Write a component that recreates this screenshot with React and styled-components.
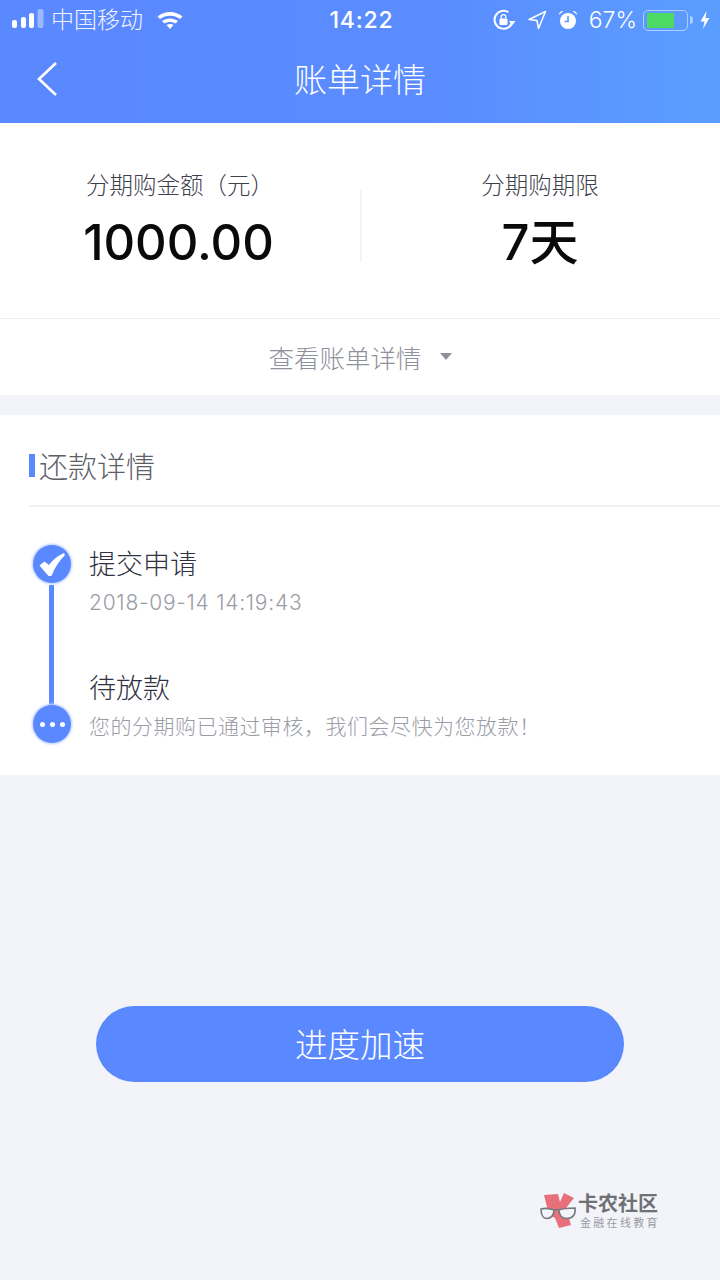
import React from 'react'
import styled, { createGlobalStyle } from 'styled-components'

const cjk = `"Noto Sans CJK SC", "Noto Sans", sans-serif`
const latin = `"Inter", "Noto Sans CJK SC", sans-serif`

const GlobalStyle = createGlobalStyle`
    html, body {
        margin: 0;
        padding: 0;
        background: #f3f4f9;
    }
    body {
        font-family: ${cjk};
    }
`

function SignalIcon() {
    return (
        <svg width="33" height="24" viewBox="0 0 33 24">
            <rect x="1" y="12" width="5" height="8" rx="2" fill="#fff" />
            <rect x="10" y="9" width="5" height="11" rx="2" fill="#fff" />
            <rect x="18" y="5" width="5" height="15" rx="2" fill="#fff" />
            <rect x="26.500" y="1" width="6" height="19" rx="2" fill="#fff" opacity="0.4" />
        </svg>
    )
}

function WifiIcon() {
    return (
        <svg width="28" height="20" viewBox="0 0 28 20">
            <path d="M1.500 6.500 C8.500 0.500 19.500 0.500 26.500 6.500 L24 9 C18.500 4.500 9.500 4.500 4 9 Z" fill="#fff" />
            <path d="M6 11 C10.500 7.500 17.500 7.500 22 11 L19.500 13.500 C16.500 11.500 11.500 11.500 8.500 13.500 Z" fill="#fff" />
            <path d="M10.500 15 C12.500 13.800 15.500 13.800 17.500 15 L14 19 Z" fill="#fff" />
        </svg>
    )
}

function RotationLockIcon() {
    return (
        <svg width="24" height="24" viewBox="0 0 24 24" fill="none">
            <path d="M20.500 13 A9 9 0 1 1 16.500 4.200" stroke="#fff" strokeWidth="2" />
            <path d="M17 13 L23.500 13 L20 17.500 Z" fill="#fff" />
            <rect x="7.500" y="10.500" width="8" height="6.500" rx="1" fill="#fff" />
            <path d="M9.200 10.500 V9 A2.300 2.300 0 0 1 13.800 9 V10.500" stroke="#fff" strokeWidth="1.300" />
        </svg>
    )
}

function LocationIcon() {
    return (
        <svg width="20" height="20" viewBox="0 0 20 20" fill="none">
            <path d="M18.500 1.500 L2 9.500 L10 10.500 L11.500 18.500 Z" stroke="#fff" strokeWidth="1.500" strokeLinejoin="round" />
        </svg>
    )
}

function AlarmIcon() {
    return (
        <svg width="20" height="20" viewBox="0 0 20 20">
            <circle cx="10" cy="11" r="8" fill="#fff" />
            <path d="M10 6 V11.500 H6.500" stroke="#5b94ff" strokeWidth="1.600" fill="none" />
            <path d="M0.800 5 A4 4 0 0 1 5.500 1 Z" fill="#fff" />
            <path d="M19.200 5 A4 4 0 0 0 14.500 1 Z" fill="#fff" />
        </svg>
    )
}

function BoltIcon() {
    return (
        <svg width="10" height="20" viewBox="0 0 10 20">
            <path d="M6.500 1 L0.500 11.500 H4.500 L3 19 L9.500 8 H5.500 Z" fill="#fff" />
        </svg>
    )
}

function CheckIcon() {
    return (
        <svg width="26" height="23" viewBox="0 0 26 23">
            <path d="M0.500 12.500 L5.500 8.500 L10 12 C13 7.500 18 3 25 0 L26 2 C20.500 7.500 15.500 14.500 12.500 23 L9.500 23 Z" fill="#fff" />
        </svg>
    )
}

function LogoIcon() {
    return (
        <svg width="38" height="38" viewBox="5 6 38 38">
            <path d="M9 10 L23 9 L25 17 L29 8 L39 13 L31 23 L36 40 L24 43 L20 33 L14 30 Z" fill="#e8707a" />
            <path d="M6 24 C10 23 14 23 19 25 C19 30 16 33.500 12 33.500 C8 33.500 6 29 6 24 Z" fill="#f3f4f9" stroke="#77777d" strokeWidth="1.600" />
            <path d="M24 25 C29 23 34 23 40 23 C41 29 38 33.500 32 33.500 C27 33.500 24 30 24 25 Z" fill="#f3f4f9" stroke="#77777d" strokeWidth="1.600" />
            <path d="M19 25 Q21.500 24 24 25" fill="none" stroke="#77777d" strokeWidth="1.600" />
        </svg>
    )
}

function BackIcon() {
    return (
        <svg width="22" height="36" viewBox="0 0 22 36" fill="none">
            <path d="M20 2 L3 18 L20 34" stroke="#fff" strokeWidth="2.600" />
        </svg>
    )
}

export default function App() {
    return (
        <Page>
            <GlobalStyle />
            <Header>
                <StatusBar>
                    <StatusSide>
                        <SignalIcon />
                        <Carrier>中国移动</Carrier>
                        <WifiIcon />
                    </StatusSide>
                    <Clock>14:22</Clock>
                    <StatusSide $right>
                        <RotationLockIcon />
                        <LocationIcon />
                        <AlarmIcon />
                        <Percent>67%</Percent>
                        <Battery>
                            <BatteryFill />
                        </Battery>
                        <BoltIcon />
                    </StatusSide>
                </StatusBar>
                <NavBar>
                    <BackButton><BackIcon /></BackButton>
                    <NavTitle>账单详情</NavTitle>
                </NavBar>
            </Header>

            <Summary>
                <SummaryCol>
                    <SummaryLabel>分期购金额（元）</SummaryLabel>
                    <SummaryValue $shift>1000.00</SummaryValue>
                </SummaryCol>
                <Divider />
                <SummaryCol>
                    <SummaryLabel>分期购期限</SummaryLabel>
                    <SummaryValue>7天</SummaryValue>
                </SummaryCol>
            </Summary>
            <Toggle>
                查看账单详情
                <Caret />
            </Toggle>

            <Card>
                <CardHead>
                    <CardMark />
                    <CardTitle>还款详情</CardTitle>
                </CardHead>
                <Timeline>
                    <Rail />
                    <Step>
                        <Dot><CheckIcon /></Dot>
                        <StepTitle>提交申请</StepTitle>
                        <StepNote $wide>2018-09-14 14:19:43</StepNote>
                    </Step>
                    <Step $last>
                        <Dot $low>
                            <Dots><i /><i /><i /></Dots>
                        </Dot>
                        <StepTitle>待放款</StepTitle>
                        <StepNote>您的分期购已通过审核，我们会尽快为您放款！</StepNote>
                    </Step>
                </Timeline>
            </Card>

            <ButtonWrap>
                <SpeedButton>进度加速</SpeedButton>
            </ButtonWrap>

            <Watermark>
                <LogoIcon />
                <MarkText>
                    <MarkName>卡农社区</MarkName>
                    <MarkSub>金融在线教育</MarkSub>
                </MarkText>
            </Watermark>
        </Page>
    )
}

const Page = styled.div`
    position: relative;
    width: 720px;
    height: 1280px;
    overflow: hidden;
    background: #f3f4f9;
`

const Header = styled.header`
    height: 123px;
    background: linear-gradient(90deg, #5a88ff 0%, #5a8cff 60%, #5b9dff 100%);
    color: #fff;
`

const StatusBar = styled.div`
    height: 40px;
    padding: 0 10px 0 11px;
    box-sizing: border-box;
    display: grid;
    grid-template-columns: 1fr auto 1fr;
    align-items: center;
`

const StatusSide = styled.div`
    display: flex;
    align-items: center;
    justify-content: ${props => props.$right ? 'flex-end' : 'flex-start'};
    gap: ${props => props.$right ? '11px' : '0'};
`

const Carrier = styled.span`
    font-size: 23px;
    font-weight: 300;
    line-height: 36px;
    margin: -4px 13px 0 7px;
    color: #f0f4ff;
`

const Clock = styled.span`
    font-family: "Inter", sans-serif;
    font-size: 23px;
    font-weight: 500;
    letter-spacing: 0.800px;
    margin-left: 2px;
`

const Percent = styled.span`
    font-family: "Inter", sans-serif;
    font-size: 23px;
    font-weight: 300;
    margin-right: -5px;
`

const Battery = styled.div`
    position: relative;
    width: 45px;
    height: 21px;
    padding: 2px 3px;
    box-sizing: border-box;
    margin-right: 1px;
    border: 1.500px solid rgba(255, 255, 255, 0.5);
    border-radius: 5px;
    &::after {
        content: '';
        position: absolute;
        right: -6px;
        top: 5px;
        width: 3px;
        height: 8px;
        background: rgba(255, 255, 255, 0.5);
        border-radius: 0 3px 3px 0;
    }
`

const BatteryFill = styled.div`
    width: 27px;
    height: 100%;
    background: #4cd964;
`

const NavBar = styled.div`
    position: relative;
    height: 83px;
    display: flex;
    align-items: center;
    justify-content: center;
`

const BackButton = styled.div`
    position: absolute;
    left: 36px;
    top: 21px;
    display: flex;
`

const NavTitle = styled.h1`
    margin: -8px 0 0;
    font-size: 33px;
    font-weight: 300;
    color: #fff;
`

const Summary = styled.section`
    height: 195px;
    background: #fff;
    display: grid;
    grid-template-columns: 360px 2px 356px;
    align-items: center;
    border-bottom: 1px solid #eeeff3;
    box-sizing: content-box;
`

const SummaryCol = styled.div`
    display: flex;
    flex-direction: column;
    align-items: center;
`

const SummaryLabel = styled.div`
    font-size: 23.500px;
    line-height: 32px;
    font-weight: 300;
    color: #3d3f4d;
`

const SummaryValue = styled.div`
    font-family: ${latin};
    font-size: 49px;
    line-height: 60px;
    font-weight: 500;
    color: #0a0a0a;
    margin-top: 13px;
    margin-right: ${props => props.$shift ? '3px' : '0'};
`

const Divider = styled.div`
    height: 72px;
    background: #f3f4f7;
    margin-top: 11px;
`

const Toggle = styled.div`
    height: 76px;
    padding-bottom: 2px;
    box-sizing: border-box;
    background: #fff;
    display: flex;
    align-items: center;
    justify-content: center;
    font-size: 25.500px;
    font-weight: 300;
    color: #8f919c;
`

const Caret = styled.span`
    width: 0;
    height: 0;
    margin-left: 18px;
    border-left: 6px solid transparent;
    border-right: 6px solid transparent;
    border-top: 7px solid #8f919c;
`

const Card = styled.section`
    margin-top: 20px;
    height: 360px;
    background: #fff;
    padding-left: 29px;
    box-sizing: border-box;
`

const CardHead = styled.div`
    height: 92px;
    padding-top: 10px;
    display: flex;
    align-items: center;
    border-bottom: 2px solid #f1f2f5;
    box-sizing: border-box;
`

const CardMark = styled.span`
    width: 6px;
    height: 23px;
    background: #5a88ff;
    margin-right: 4px;
`

const CardTitle = styled.h2`
    margin: 0;
    font-size: 29px;
    font-weight: 300;
    color: #5c5e68;
`

const Timeline = styled.div`
    position: relative;
    padding: 37px 0 0 60px;
`

const Rail = styled.div`
    position: absolute;
    left: 20px;
    top: 78px;
    width: 5px;
    height: 122px;
    background: #5a88ff;
`

const Step = styled.div`
    position: relative;
    height: ${props => props.$last ? '87px' : '124px'};
`

const Dot = styled.div`
    position: absolute;
    left: -56px;
    top: ${props => props.$low ? '37px' : '1px'};
    width: 38px;
    height: 38px;
    border-radius: 50%;
    background: #5a88ff;
    box-shadow: 0 0 2px 1.500px #c6d6ff;
    display: flex;
    align-items: center;
    justify-content: center;
`

const Dots = styled.div`
    display: flex;
    gap: 5px;
    i {
        width: 5px;
        height: 5px;
        border-radius: 50%;
        background: #fff;
    }
`

const StepTitle = styled.div`
    font-size: 27px;
    line-height: 38px;
    font-weight: 300;
    color: #2f3242;
`

const StepNote = styled.div`
    font-family: ${latin};
    font-size: 21px;
    line-height: 28px;
    font-weight: 300;
    margin-top: 7px;
    color: #9a9ca6;
    letter-spacing: ${props => props.$wide ? '0.750px' : '0.500px'};
`

const ButtonWrap = styled.div`
    margin-top: 231px;
    display: flex;
    justify-content: center;
`

const SpeedButton = styled.button`
    width: 528px;
    height: 76px;
    padding: 0 0 4px;
    border: 0;
    border-radius: 38px;
    background: #5a88ff;
    color: #fff;
    font-family: ${cjk};
    font-size: 32.500px;
    font-weight: 300;
`

const Watermark = styled.div`
    position: absolute;
    left: 540px;
    top: 1191px;
    display: flex;
    align-items: center;
`

const MarkText = styled.div`
    display: flex;
    flex-direction: column;
    gap: 3px;
    margin-top: 1px;
`

const MarkName = styled.span`
    font-size: 20px;
    line-height: 20px;
    font-weight: 700;
    color: #6f7076;
`

const MarkSub = styled.span`
    font-size: 11px;
    line-height: 12px;
    letter-spacing: 2.300px;
    margin-left: 2px;
    color: #9a9ba1;
`
